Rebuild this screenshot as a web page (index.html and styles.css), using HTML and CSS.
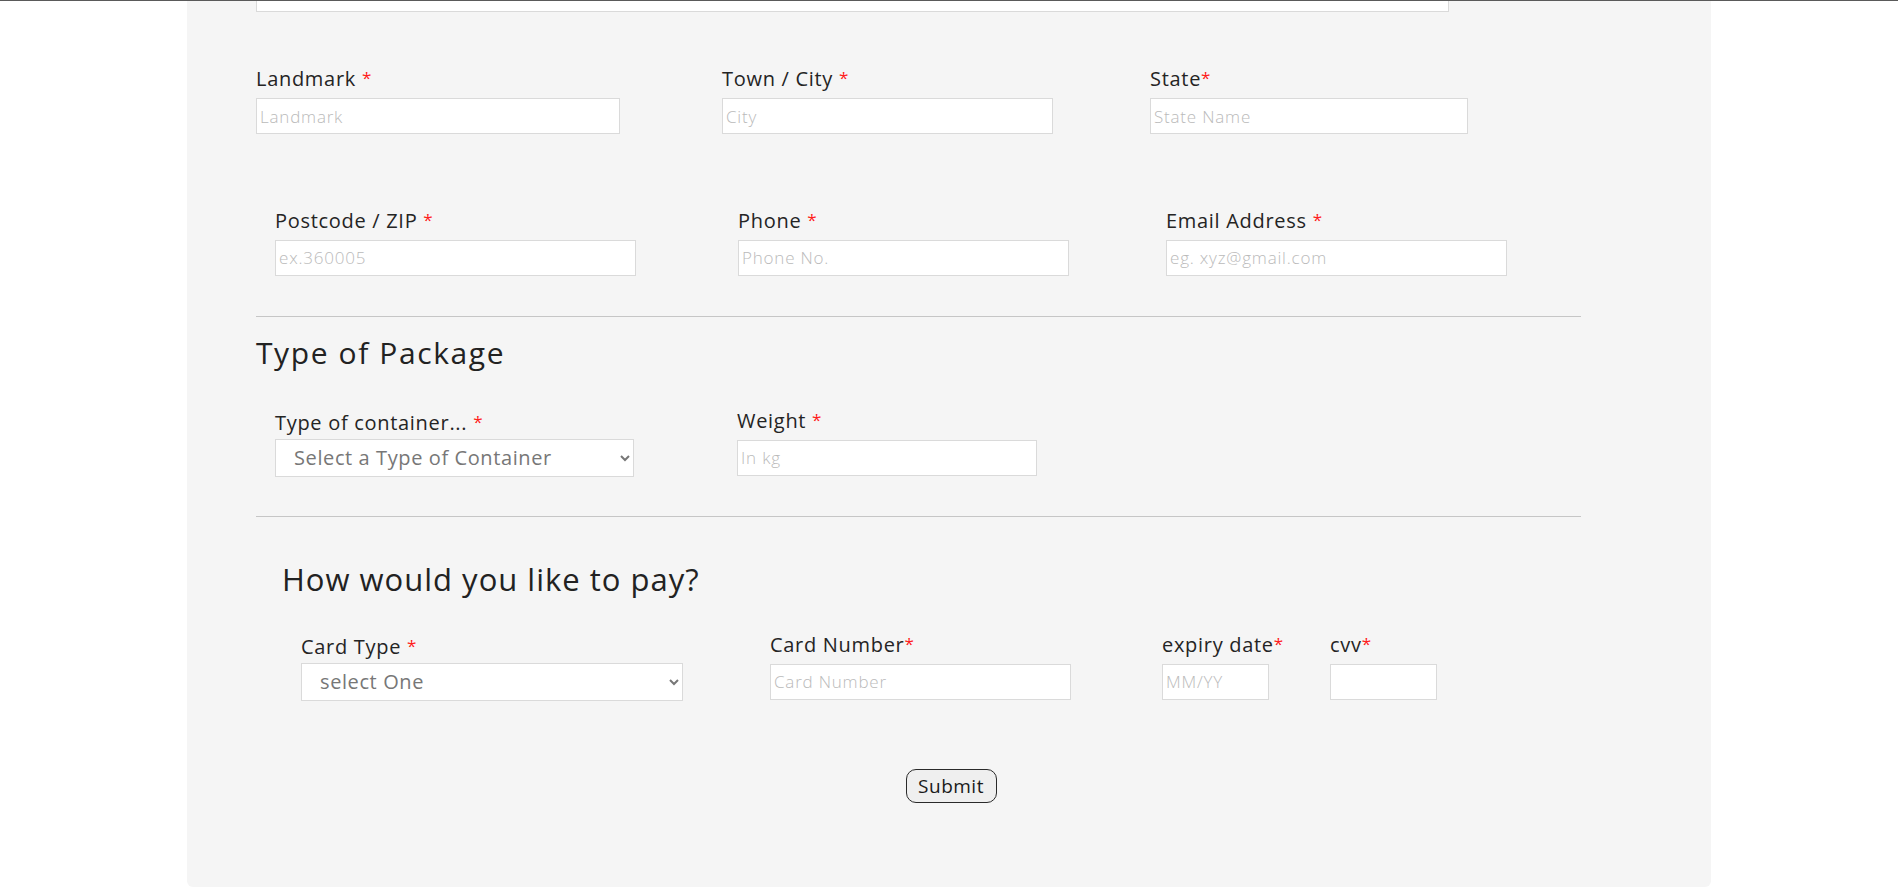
FILE: index.html
```html
<!DOCTYPE html>
<html lang="en">
<head>
<meta charset="utf-8">
<title>Shipment form</title>
<link rel="stylesheet" href="styles.css">
</head>
<body>
<div class="topbar"></div>
<form class="panel">
  <div class="stub"></div>

  <div class="row row-address">
    <div class="field">
      <label class="lbl">Landmark <span class="req">*</span></label>
      <input class="inp w364" type="text" placeholder="Landmark">
    </div>
    <div class="field">
      <label class="lbl">Town / City <span class="req">*</span></label>
      <input class="inp w331" type="text" placeholder="City">
    </div>
    <div class="field">
      <label class="lbl">State<span class="req">*</span></label>
      <input class="inp w318" type="text" placeholder="State Name">
    </div>
  </div>

  <div class="row row-contact">
    <div class="field">
      <label class="lbl">Postcode / ZIP <span class="req">*</span></label>
      <input class="inp w361" type="text" placeholder="ex.360005">
    </div>
    <div class="field">
      <label class="lbl">Phone <span class="req">*</span></label>
      <input class="inp w331" type="text" placeholder="Phone No.">
    </div>
    <div class="field">
      <label class="lbl">Email Address <span class="req">*</span></label>
      <input class="inp w341" type="text" placeholder="eg. xyz@gmail.com">
    </div>
  </div>

  <hr class="divider divider-1">

  <h2 class="heading heading-pkg">Type of Package</h2>

  <div class="row row-package">
    <div class="field field-select">
      <label class="lbl">Type of container... <span class="req">*</span></label>
      <select class="sel w359">
        <option>Select a Type of Container</option>
      </select>
    </div>
    <div class="field field-raised">
      <label class="lbl">Weight <span class="req">*</span></label>
      <input class="inp w300" type="text" placeholder="In kg">
    </div>
  </div>

  <hr class="divider divider-2">

  <h2 class="heading heading-pay">How would you like to pay?</h2>

  <div class="row row-pay">
    <div class="field field-select">
      <label class="lbl">Card Type <span class="req">*</span></label>
      <select class="sel w382">
        <option>select One</option>
      </select>
    </div>
    <div class="field field-raised">
      <label class="lbl">Card Number<span class="req">*</span></label>
      <input class="inp w301" type="text" placeholder="Card Number">
    </div>
    <div class="field field-raised">
      <label class="lbl">expiry date<span class="req">*</span></label>
      <input class="inp w107" type="text" placeholder="MM/YY">
    </div>
    <div class="field field-raised">
      <label class="lbl">cvv<span class="req">*</span></label>
      <input class="inp w107" type="text">
    </div>
  </div>

  <div class="actions">
    <button class="submit" type="button">Submit</button>
  </div>
</form>
</body>
</html>
```

FILE: styles.css
```css
html, body {
  margin: 0;
  padding: 0;
  background: #ffffff;
}

body {
  font-family: "Open Sans", "Liberation Sans", sans-serif;
  color: #222222;
}

.topbar {
  height: 1px;
  background: #5a5a5a;
}

.panel {
  width: 1524px;
  margin: 0 auto;
  box-sizing: border-box;
  padding: 0 69px 84px 69px;
  background: #f5f5f5;
  border-radius: 0 0 6px 6px;
}

.stub {
  width: 1193px;
  height: 11px;
  box-sizing: border-box;
  background: #ffffff;
  border: 1px solid #dadada;
  border-top: none;
}

.row {
  display: grid;
  align-items: end;
}

.field {
  display: flex;
  flex-direction: column;
  align-items: flex-start;
}

.lbl {
  display: block;
  font-size: 20px;
  line-height: 24px;
  letter-spacing: 0.7px;
  color: #242424;
  margin-bottom: 7px;
  white-space: nowrap;
}

.field-select .lbl {
  margin-bottom: 4px;
}

.req {
  color: #ff1a1a;
  font-size: 17px;
  vertical-align: 2px;
}

.inp {
  height: 36px;
  box-sizing: border-box;
  margin: 0;
  padding: 1px 3px;
  border: 1px solid #dadada;
  border-radius: 0;
  background: #ffffff;
  font-family: "Open Sans", "Liberation Sans", sans-serif;
  font-size: 17px;
  color: #333;
  outline: none;
}

.inp::placeholder {
  color: #bababa;
  font-weight: 300;
  letter-spacing: 0.8px;
}

.sel {
  height: 38px;
  box-sizing: border-box;
  margin: 0;
  padding: 0 10px 0 14px;
  border: 1px solid #dadada;
  border-radius: 0;
  background: #ffffff;
  font-family: "Open Sans", "Liberation Sans", sans-serif;
  font-size: 20px;
  letter-spacing: 0.6px;
  color: #777777;
}

.w364 { width: 364px; }
.w331 { width: 331px; }
.w318 { width: 318px; }
.w361 { width: 361px; }
.w341 { width: 341px; }
.w359 { width: 359px; }
.w300 { width: 300px; }
.w382 { width: 382px; }
.w301 { width: 301px; }
.w107 { width: 107px; }

.row-address {
  margin-top: 54px;
  grid-template-columns: 466px 428px auto;
}

.row-contact {
  margin-top: 73.5px;
  padding-left: 19px;
  grid-template-columns: 463px 428px auto;
}

.divider {
  width: 1325px;
  height: 0;
  margin: 0;
  border: none;
  border-top: 1px solid #c6c6c6;
}

.divider-1 {
  margin-top: 40px;
}

.heading {
  margin: 0;
  font-weight: 400;
  color: #222222;
  white-space: nowrap;
}

.heading-pkg {
  margin-top: 18px;
  font-size: 30px;
  line-height: 36px;
  letter-spacing: 1.6px;
}

.row-package {
  margin-top: 37px;
  padding-left: 19px;
  grid-template-columns: 462px auto;
}

.field-raised .inp {
  margin-bottom: 1px;
}

.divider-2 {
  margin-top: 39px;
}

.heading-pay {
  margin-top: 44px;
  padding-left: 26px;
  font-size: 31px;
  line-height: 36px;
  letter-spacing: 1px;
}

.row-pay {
  margin-top: 35px;
  padding-left: 45px;
  grid-template-columns: 469px 392px 168px auto;
}

.actions {
  margin-top: 68px;
  display: flex;
  justify-content: center;
}

.submit {
  width: 91px;
  height: 34px;
  margin-left: 4px;
  box-sizing: border-box;
  padding: 0;
  border: 1px solid #2a2a2a;
  border-radius: 10px;
  background: #efefef;
  font-family: "Open Sans", "Liberation Sans", sans-serif;
  font-size: 19px;
  letter-spacing: 0.5px;
  color: #1a1a1a;
}
```
